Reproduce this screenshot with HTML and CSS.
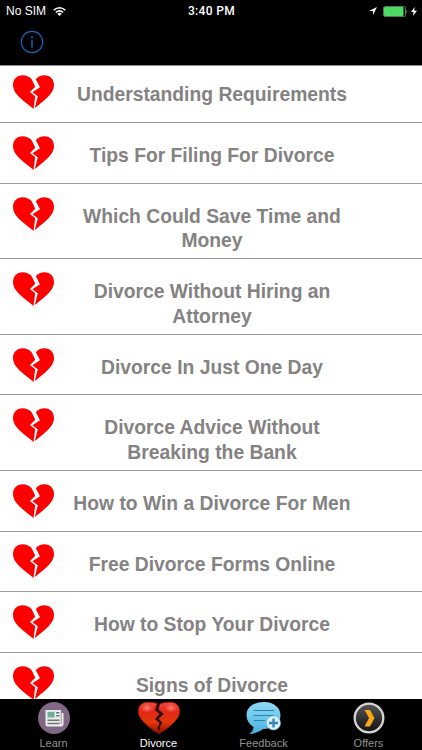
FILE: index.html
```html
<!DOCTYPE html>
<html lang="en">
<head>
    <meta charset="UTF-8">
    <meta name="viewport" content="width=device-width, initial-scale=1.0">
    <title>Divorce</title>
    <link rel="stylesheet" href="styles.css">
</head>
<body>
    <svg class="defs" aria-hidden="true">
        <symbol id="heart" viewBox="0 0 41 34">
            <path fill="#fe0000" d="M20.500 34C17 31 12 27.500 7.500 23.300C3 19 0 15 0 10C0 4 4 .200 9.500 .200C13.500 .200 17 2 18.800 4.600L22.300 11.800L17 17L22.200 21.200Z"/>
            <path fill="#fe0000" d="M21.800 33C25 30.500 29.500 27 33.500 23.300C38 19 41 15 41 10C41 4 37 .200 31.500 .200C28 .200 24.800 1.500 22.800 4.300L27 12.300L19.400 17.200L24.800 21.300Z"/>
        </symbol>
    </svg>

    <div class="screen">
        <header class="header">
            <div class="status">
                <div class="carrier">
                    <span>No SIM</span>
                    <svg class="wifi" viewBox="0 0 13 9">
                        <g fill="none" stroke="#fff" stroke-width="1.500">
                            <path d="M.700 3.200Q6.500-1.600 12.300 3.200"/>
                            <path d="M2.900 5.400Q6.500 2.400 10.100 5.400"/>
                        </g>
                        <path fill="#fff" d="M4.300 6.700Q6.500 5 8.700 6.700L6.500 9Z"/>
                    </svg>
                </div>
                <span class="time">3:40 PM</span>
                <div class="power">
                    <svg class="location" viewBox="0 0 8 8"><path fill="#fff" d="M8 0L0 4H4V8Z"/></svg>
                    <svg class="battery" viewBox="0 0 25 11">
                        <rect x=".500" y=".500" width="22" height="10" rx="1.500" fill="none" stroke="#4b7a53"/>
                        <rect x="1" y="1" width="19.500" height="9" rx="1" fill="#4cd964"/>
                        <path fill="#aaa" d="M23.500 3.700Q25 5.500 23.500 7.300Z"/>
                    </svg>
                    <svg class="bolt" viewBox="0 0 6 9"><path fill="#fff" d="M3.700 0L0 5H2.600L1.900 9L6 3.800H3.300Z"/></svg>
                </div>
            </div>
            <svg class="info" viewBox="0 0 24 24">
                <circle cx="12" cy="12" r="10.700" fill="none" stroke="#1765b8" stroke-width="1.200"/>
                <path d="M12 9.800V17.500" stroke="#1765b8" stroke-width="1.500"/>
                <circle cx="12" cy="7" r="1.100" fill="#1765b8"/>
            </svg>
        </header>

        <ul class="list">
            <li class="row"><svg class="heart"><use href="#heart"/></svg><span class="title">Understanding Requirements</span></li>
            <li class="row"><svg class="heart"><use href="#heart"/></svg><span class="title">Tips For Filing For Divorce</span></li>
            <li class="row tall"><svg class="heart"><use href="#heart"/></svg><span class="title">Which Could Save Time and Money</span></li>
            <li class="row tall"><svg class="heart"><use href="#heart"/></svg><span class="title">Divorce Without Hiring an Attorney</span></li>
            <li class="row"><svg class="heart"><use href="#heart"/></svg><span class="title">Divorce In Just One Day</span></li>
            <li class="row tall"><svg class="heart"><use href="#heart"/></svg><span class="title">Divorce Advice Without Breaking the Bank</span></li>
            <li class="row"><svg class="heart"><use href="#heart"/></svg><span class="title">How to Win a Divorce For Men</span></li>
            <li class="row"><svg class="heart"><use href="#heart"/></svg><span class="title">Free Divorce Forms Online</span></li>
            <li class="row"><svg class="heart"><use href="#heart"/></svg><span class="title">How to Stop Your Divorce</span></li>
            <li class="row"><svg class="heart"><use href="#heart"/></svg><span class="title">Signs of Divorce</span></li>
        </ul>

        <nav class="tabs">
            <div class="tab">
                <svg class="icon" viewBox="0 0 44 34">
                    <circle cx="22" cy="17" r="16" fill="#806783"/>
                    <path fill="#e9edec" d="M13.500 9H29V12H31.500V23Q31.500 25.500 29 25.500H15.500Q13.500 25.500 13.500 23.500Z"/>
                    <path stroke="#806783" stroke-width=".700" d="M29.200 12V23.500"/>
                    <path fill="#6fae98" d="M15.500 10.800H22.500V16.500H15.500Z"/>
                    <path stroke="#727579" stroke-width="1.400" d="M24 11.700H27.500M24 14.700H27.500M15.500 19.200H27.500M15.500 22.500H27.500"/>
                </svg>
                <span>Learn</span>
            </div>
            <div class="tab active">
                <svg class="icon" viewBox="0 0 44 34">
                    <defs>
                        <linearGradient id="red" x1="0" y1="0" x2="0" y2="1">
                            <stop offset="0" stop-color="#f3483e"/>
                            <stop offset=".3" stop-color="#e12818"/>
                            <stop offset=".65" stop-color="#e23809"/>
                            <stop offset="1" stop-color="#8d0904"/>
                        </linearGradient>
                        <radialGradient id="shine">
                            <stop offset="0" stop-color="#ff9388" stop-opacity=".9"/>
                            <stop offset="1" stop-color="#ff5143" stop-opacity="0"/>
                        </radialGradient>
                    </defs>
                    <path fill="url(#red)" stroke="#971713" stroke-width=".700" d="M22 32.500C16 29.500 7 23 2.500 15.500C-1 8 3 1.500 10 1.200C15 1 19 1.800 22 3.500C25 1.800 29 1 34 1.200C41 1.500 45 8 41.500 15.500C37 23 28 29.500 22 32.500Z"/>
                    <ellipse cx="10" cy="7" rx="7" ry="5" fill="url(#shine)"/>
                    <ellipse cx="34" cy="7" rx="7" ry="5" fill="url(#shine)"/>
                    <path fill="#260503" d="M20 2.500L18 9L22.500 13L18 18L22.500 22L20.500 27L22.500 30L22.800 26L25.500 21.500L21.500 18L26.500 13L21.500 8.500L23 2.500Z"/>
                </svg>
                <span>Divorce</span>
            </div>
            <div class="tab">
                <svg class="icon" viewBox="0 0 44 34">
                    <defs>
                        <linearGradient id="blue" x1="0" y1="0" x2="0" y2="1">
                            <stop offset="0" stop-color="#91daf7"/>
                            <stop offset="1" stop-color="#49b0df"/>
                        </linearGradient>
                    </defs>
                    <path fill="url(#blue)" d="M22 1C32 1 38.500 7 38.500 14C38.500 23 31 28 21 28C17 31 12 33 7 33C10 31 11.500 29 11.500 26C7 23 4.500 19 4.500 14C4.500 6 12 1 22 1Z"/>
                    <path stroke="#2682ad" stroke-width="1.100" d="M11.500 9.500H32M11.500 14.500H32M11.500 19.500H23"/>
                    <circle cx="31.500" cy="22" r="7" fill="#d9f2fc" stroke="#73bfe3" stroke-width=".600"/>
                    <path stroke="#3485b6" stroke-width="2.300" d="M31.500 17.500V26.500M27 22H36"/>
                </svg>
                <span>Feedback</span>
            </div>
            <div class="tab">
                <svg class="icon" viewBox="0 0 44 34">
                    <defs>
                        <linearGradient id="dark" x1="0" y1="0" x2="0" y2="1">
                            <stop offset="0" stop-color="#555"/>
                            <stop offset="1" stop-color="#111"/>
                        </linearGradient>
                    </defs>
                    <circle cx="22" cy="17" r="14.300" fill="url(#dark)" stroke="#d5d5d5" stroke-width="2.300"/>
                    <path fill="#f9a61b" d="M17.500 9H23L27.500 17L23 25.500H17.500L22 17Z"/>
                </svg>
                <span>Offers</span>
            </div>
        </nav>
    </div>
</body>
</html>
```
FILE: styles.css
```css
* {
    box-sizing: border-box;
}

body {
    margin: 0;
    background: #fff;
    font-family: "Liberation Sans", Arial, sans-serif;
}

.defs {
    display: none;
}

.screen {
    display: flex;
    flex-direction: column;
    height: 750px;
    overflow: hidden;
}

.header {
    flex: none;
    height: 66px;
    background: #000;
    border-bottom: 1px solid #8c8c8c;
    color: #fff;
    z-index: 1;
}

.status {
    display: grid;
    grid-template-columns: 1fr auto 1fr;
    align-items: center;
    height: 22px;
    padding: 0 5px 0 6px;
    font-size: 12px;
}

.carrier,
.power {
    display: flex;
    align-items: center;
}

.carrier {
    gap: 7px;
}

.power {
    justify-content: flex-end;
}

.time {
    font-family: Roboto, sans-serif;
    font-weight: 500;
    font-size: 12px;
    letter-spacing: 0.35px;
}

.wifi {
    width: 13px;
    height: 9px;
}

.location {
    width: 8px;
    height: 8px;
    margin-right: 6px;
}

.battery {
    width: 25px;
    height: 11px;
    margin-right: 3px;
}

.bolt {
    width: 6px;
    height: 9px;
}

.info {
    display: block;
    width: 24px;
    height: 24px;
    margin: 8px 0 0 20px;
}

/* first row starts slightly under the header */
.list {
    flex: 1;
    min-height: 0;
    overflow: hidden;
    margin: -3.6px 0 0;
    padding: 0;
    list-style: none;
}

.row {
    display: flex;
    align-items: flex-start;
    height: 60.7px;
    border-bottom: 1px solid #9c9c9c;
}

.row.tall {
    height: 75.5px;
}

.heart {
    flex: none;
    width: 41px;
    height: 34px;
    margin: 12.8px 0 0 13.3px;
}

.title {
    width: 288px;
    margin: 21px 0 0 13.7px;
    color: #848282;
    font-size: 19.3px;
    font-weight: bold;
    line-height: 24.6px;
    text-align: center;
}

.tabs {
    display: grid;
    grid-template-columns: repeat(4, 105px);
    flex: none;
    height: 51px;
    padding-left: 1px;
    background: #000;
    z-index: 1;
}

.tab {
    display: flex;
    flex-direction: column;
    align-items: center;
    padding-top: 2px;
    color: #929292;
    font-size: 11px;
    line-height: 13px;
}

.tab.active {
    color: #fff;
}

.icon {
    width: 44px;
    height: 34px;
    margin-bottom: 2px;
}
```
